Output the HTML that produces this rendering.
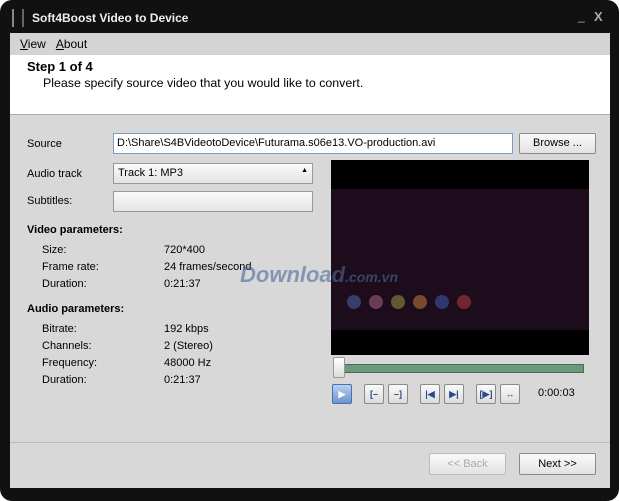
<!DOCTYPE html><html><head><style>
body{margin:0;width:619px;height:501px;background:#fff;font-family:"Liberation Sans",sans-serif;font-size:11px;color:#000;position:relative;overflow:hidden}
.a{position:absolute}
.btn{position:absolute;background:linear-gradient(#fafafa,#e2e2e2);border:1px solid #8a8a8a;border-radius:2px;text-align:center;box-sizing:border-box}
.cb{position:absolute;width:20px;height:20px;background:linear-gradient(#fafafa,#dcdcdc);border:1px solid #8a8a8a;border-radius:2px;box-sizing:border-box;color:#2a4a8a;font-size:9px;text-align:center;line-height:18px;font-weight:bold}
.d{position:absolute;top:295px;width:14px;height:14px;border-radius:50%;opacity:.45}
</style></head><body>
<div class="a" style="left:0;top:0;width:619px;height:501px;background:#111;border-radius:12px"></div>
<div class="a" style="left:12px;top:9px;width:8px;height:18px;border-left:2px solid #888;border-right:2px solid #666"></div>
<div class="a" style="left:32px;top:11px;color:#eee;font-weight:bold;font-size:12px">Soft4Boost Video to Device</div>
<div class="a" style="left:578px;top:9px;color:#aaa;font-size:12px">_</div>
<div class="a" style="left:594px;top:9px;color:#aaa;font-size:13px;font-weight:bold">X</div>
<div class="a" style="left:10px;top:33px;width:600px;height:455px;background:#d8d8d8"></div>
<div class="a" style="left:10px;top:33px;width:600px;height:22px;background:#d4d4d4"></div>
<div class="a" style="left:20px;top:37px;font-size:12px"><u>V</u>iew &nbsp;&nbsp;<u>A</u>bout</div>
<div class="a" style="left:10px;top:55px;width:600px;height:59px;background:#fff;border-bottom:1px solid #aaa"></div>
<div class="a" style="left:27px;top:59px;font-weight:bold;font-size:13px">Step 1 of 4</div>
<div class="a" style="left:43px;top:76px;font-size:12.4px">Please specify source video that you would like to convert.</div>
<div class="a" style="left:27px;top:138px">Source</div>
<div class="a" style="left:113px;top:133px;width:400px;height:21px;background:#fff;border:1px solid #7a9cc8;box-sizing:border-box;padding:3px 3px">D:\Share\S4BVideotoDevice\Futurama.s06e13.VO-production.avi</div>
<div class="btn" style="left:519px;top:133px;width:77px;height:21px;line-height:19px">Browse ...</div>
<div class="a" style="left:27px;top:168px">Audio track</div>
<div class="a" style="left:113px;top:163px;width:200px;height:21px;background:linear-gradient(#fafafa,#e4e4e4);border:1px solid #999;box-sizing:border-box;padding:3px 4px">Track 1: MP3<span style="float:right;font-size:7px">▲<br></span></div>
<div class="a" style="left:27px;top:195px">Subtitles:</div>
<div class="a" style="left:113px;top:191px;width:200px;height:21px;background:linear-gradient(#fafafa,#e4e4e4);border:1px solid #999;box-sizing:border-box"></div>
<div class="a" style="left:27px;top:224px;font-weight:bold">Video parameters:</div>
<div class="a" style="left:42px;top:242px;line-height:17px">Size:<br>Frame rate:<br>Duration:</div>
<div class="a" style="left:164px;top:242px;line-height:17px">720*400<br>24 frames/second<br>0:21:37</div>
<div class="a" style="left:27px;top:303px;font-weight:bold">Audio parameters:</div>
<div class="a" style="left:42px;top:321px;line-height:17px">Bitrate:<br>Channels:<br>Frequency:<br>Duration:</div>
<div class="a" style="left:164px;top:321px;line-height:17px">192 kbps<br>2 (Stereo)<br>48000 Hz<br>0:21:37</div>
<div class="a" style="left:331px;top:160px;width:258px;height:195px;background:#000"></div>
<div class="a" style="left:331px;top:189px;width:258px;height:141px;background:#1c0c1c"></div>
<div class="d" style="left:347px;background:#5a7ac8"></div>
<div class="d" style="left:369px;background:#c87a9a"></div>
<div class="d" style="left:391px;background:#b8b84a"></div>
<div class="d" style="left:413px;background:#e89a4a"></div>
<div class="d" style="left:435px;background:#4a6ad8"></div>
<div class="d" style="left:457px;background:#d84a4a"></div>
<div class="a" style="left:240px;top:262px;font-size:22px;font-weight:bold;font-style:italic;color:#4a6a9a;opacity:.6">Download<span style="font-size:14px">.com.vn</span></div>
<div class="a" style="left:338px;top:364px;width:244px;height:7px;background:#6a9a7a;border:1px solid #4a6a5a"></div>
<div class="a" style="left:333px;top:357px;width:10px;height:19px;background:linear-gradient(#fff,#ddd);border:1px solid #999;border-radius:2px"></div>
<div class="cb" style="left:332px;top:384px;background:linear-gradient(#b8d0f0,#6a94d0);border-color:#4a70a8;color:#fff">▶</div>
<div class="cb" style="left:364px;top:384px">[–</div>
<div class="cb" style="left:388px;top:384px">–]</div>
<div class="cb" style="left:420px;top:384px">|◀</div>
<div class="cb" style="left:444px;top:384px">▶|</div>
<div class="cb" style="left:476px;top:384px">[▶]</div>
<div class="cb" style="left:500px;top:384px">↔</div>
<div class="a" style="left:538px;top:387px">0:00:03</div>
<div class="a" style="left:10px;top:442px;width:600px;height:1px;background:#bbb"></div>
<div class="btn" style="left:429px;top:453px;width:77px;height:22px;line-height:20px;color:#aaa;border-color:#bbb">&lt;&lt; Back</div>
<div class="btn" style="left:519px;top:453px;width:77px;height:22px;line-height:20px">Next &gt;&gt;</div>
</body></html>
